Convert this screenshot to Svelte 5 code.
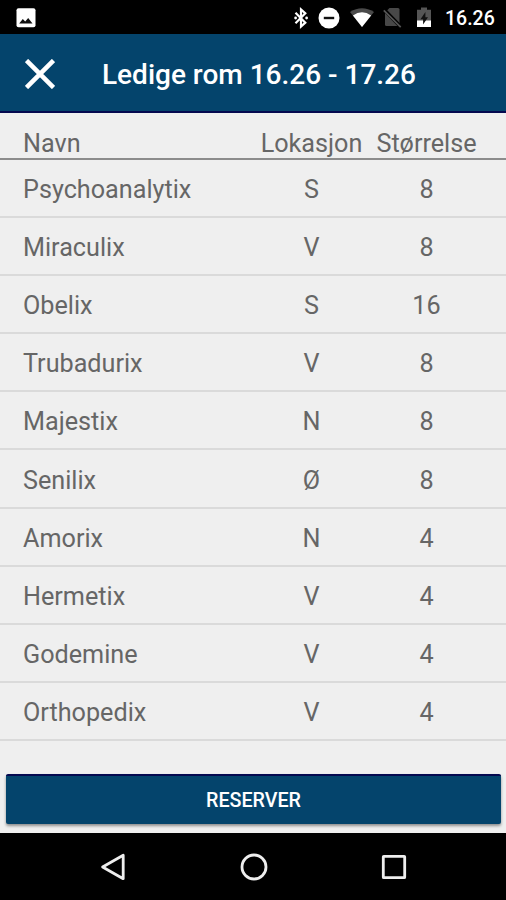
<script>
	const rooms = [
		{ name: 'Psychoanalytix', location: 'S', size: 8 },
		{ name: 'Miraculix', location: 'V', size: 8 },
		{ name: 'Obelix', location: 'S', size: 16 },
		{ name: 'Trubadurix', location: 'V', size: 8 },
		{ name: 'Majestix', location: 'N', size: 8 },
		{ name: 'Senilix', location: 'Ø', size: 8 },
		{ name: 'Amorix', location: 'N', size: 4 },
		{ name: 'Hermetix', location: 'V', size: 4 },
		{ name: 'Godemine', location: 'V', size: 4 },
		{ name: 'Orthopedix', location: 'V', size: 4 }
	];

	let from = '16.26';
	let to = '17.26';
</script>

<div class="screen">
	<div class="status-bar">
		<svg class="picture" width="20" height="20" viewBox="0 0 20 20">
			<rect x="0.5" y="0.3" width="19" height="19" rx="2" fill="#fff" />
			<path d="M3.2 15.6 6.8 11l2.4 2.6L12.2 10l4.3 5.6z" fill="#111" />
		</svg>
		<!-- Bluetooth -->
		<svg class="bluetooth" width="16" height="22" viewBox="0 0 16 22">
			<path d="M2.5 5.8 12.3 15.6 8 19.5V2.5L12.3 6.4 2.500 16.200" fill="none" stroke="#fff" stroke-width="2.2" />
			<circle cx="2.6" cy="11" r="1.4" fill="#fff" />
			<circle cx="13.6" cy="11" r="1.4" fill="#fff" />
		</svg>
		<!-- Do not disturb -->
		<svg class="dnd" width="22" height="22" viewBox="0 0 22 22">
			<circle cx="11" cy="11" r="10.5" fill="#fff" />
			<rect x="5.8" y="9.8" width="10.4" height="2.4" fill="#111" />
		</svg>
		<!-- Wifi -->
		<svg class="wifi" width="24" height="19" viewBox="0 0 24 19">
			<path d="M0 4Q12-3.5 24 4L12 19z" fill="#4a4a4a" />
			<path d="M2.9 7.4Q12 1.2 21.1 7.4L12 19z" fill="#fff" />
		</svg>
		<!-- No sim -->
		<svg class="sim" width="19" height="21" viewBox="0 0 19 21">
			<path d="M6.5 1H15q1.5 0 1.5 1.5V19h-13Q2 19 2 17.500v-12z" fill="#484848" />
			<path d="M1 2.4 17.7 19.8" stroke="#000" stroke-width="3.6" />
			<path d="M0.8 3.4 17.7 20.2" stroke="#555" stroke-width="1.7" />
		</svg>
		<!-- Battery -->
		<svg class="battery" width="14" height="21" viewBox="0 0 14 21">
			<path d="M4 0.5h6v2.2h4V14H0V2.7h4z" fill="#555" />
			<path d="M0 13.500h14v6.500H0z" fill="#fff" />
			<path d="M8.4 5 3.5 12.3h2.6v5.2L11 10.2H8.400z" fill="#111" />
		</svg>
		<span class="clock">16.26</span>
	</div>

	<header>
		<svg class="close" width="30" height="30" viewBox="0 0 30 30">
			<path d="M1.5 1.5 28.5 28.5M28.5 1.5 1.5 28.5" stroke="#fff" stroke-width="4.6" />
		</svg>
		<h1>Ledige rom {from} - {to}</h1>
	</header>

	<main>
		<div class="row head">
			<span>Navn</span>
			<span class="center">Lokasjon</span>
			<span class="center">Størrelse</span>
		</div>
		{#each rooms as room}
			<div class="row">
				<span>{room.name}</span>
				<span class="center">{room.location}</span>
				<span class="center">{room.size}</span>
			</div>
		{/each}
	</main>

	<div class="actions">
		<button>RESERVER</button>
	</div>

	<nav>
		<svg width="28" height="28" viewBox="0 0 28 28">
			<path d="M24.2 2.3V25.7L3.6 14z" fill="none" stroke="#eee" stroke-width="2.8" stroke-linejoin="round" />
		</svg>
		<svg width="28" height="28" viewBox="0 0 28 28">
			<circle cx="14" cy="14" r="12" fill="none" stroke="#eee" stroke-width="2.8" />
		</svg>
		<svg width="28" height="28" viewBox="0 0 28 28">
			<rect x="3.3" y="3.3" width="21.4" height="21.4" rx="0.5" fill="none" stroke="#eee" stroke-width="2.8" />
		</svg>
	</nav>
</div>

<style>
	:global(body) {
		background: #000;
	}

	.screen {
		display: flex;
		flex-direction: column;
		width: 506px;
		height: 900px;
		overflow: hidden;
		background: #efefef;
		color: #666;
		font-family: Roboto, sans-serif;
	}

	svg {
		display: block;
		flex: none;
	}

	.status-bar {
		display: flex;
		align-items: center;
		box-sizing: border-box;
		height: 34px;
		flex: none;
		padding: 1px 11px 0 16px;
		background: #000;
	}

	.bluetooth {
		margin-left: auto;
	}

	.dnd {
		margin-left: 9px;
	}

	.wifi {
		margin-left: 10px;
	}

	.sim {
		margin-left: 9px;
	}

	.battery {
		margin-left: 15px;
	}

	.clock {
		width: 50px;
		margin-left: 14px;
		padding-top: 2px;
		color: #fff;
		font-size: 19.5px;
		font-weight: 500;
		line-height: 32px;
		white-space: nowrap;
	}

	header {
		display: flex;
		align-items: center;
		box-sizing: border-box;
		flex: none;
		height: 79px;
		padding: 2px 0 0 25px;
		background: #04446c;
		border-bottom: 2px solid #04094f;
	}

	h1 {
		margin: 2px 0 0 47px;
		color: #fff;
		font-size: 28px;
		font-weight: 500;
		white-space: nowrap;
	}

	main {
		flex: 1;
	}

	.row {
		display: grid;
		grid-template-columns: 231px 115px 115px;
		align-items: center;
		box-sizing: border-box;
		height: 58.1px;
		padding: 3px 0 0 23px;
		border-bottom: 2px solid #dadada;
		font-size: 25.2px;
	}

	.row.head {
		height: 47px;
		padding-top: 15px;
		border-bottom-color: #8c8c8c;
	}

	.center {
		text-align: center;
	}

	.actions {
		flex: none;
		padding: 0 5px 9px 6px;
	}

	button {
		display: block;
		width: 100%;
		height: 50px;
		padding: 0;
		border: 0;
		border-top: 2px solid #04094f;
		border-radius: 2px;
		background: #04446c;
		box-shadow: 0 2px 3px rgba(0, 0, 0, 0.4);
		color: #fff;
		font-family: inherit;
		font-size: 19.7px;
		font-weight: 500;
	}

	nav {
		display: flex;
		justify-content: center;
		align-items: center;
		gap: 112.5px;
		box-sizing: border-box;
		flex: none;
		height: 67px;
		padding-left: 1px;
		background: #000;
	}
</style>
